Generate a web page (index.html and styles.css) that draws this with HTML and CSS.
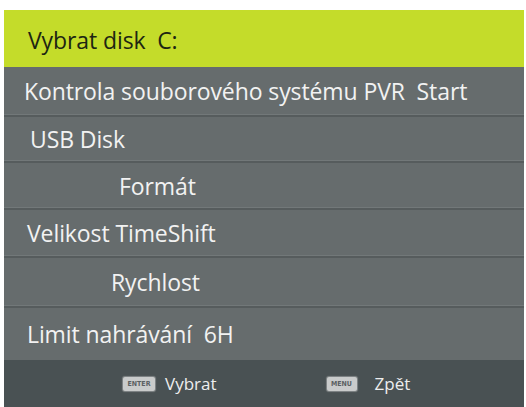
FILE: index.html
```html
<!DOCTYPE html>
<html>
<head>
<meta charset="utf-8">
<link rel="stylesheet" href="styles.css">
</head>
<body>
<div class="panel">
  <div class="header"><span class="t-head">Vybrat disk&nbsp; C:</span></div>
  <div class="row r1"><span class="t t-1">Kontrola souborového systému PVR&nbsp; Start</span></div>
  <div class="row r2"><span class="t t-2">USB Disk</span></div>
  <div class="row r3"><span class="t t-3">Formát</span></div>
  <div class="row r4"><span class="t t-4">Velikost TimeShift</span></div>
  <div class="row r5"><span class="t t-5">Rychlost</span></div>
  <div class="row r6"><span class="t t-6">Limit nahrávání&nbsp; 6H</span></div>
  <div class="footer">
    <div class="hint hint-enter"><span class="key">ENTER</span><span class="hint-label">Vybrat</span></div>
    <div class="hint hint-menu"><span class="key key-menu">MENU</span><span class="hint-label">Zpět</span></div>
  </div>
</div>
</body>
</html>
```

FILE: styles.css
```css
html, body {
  margin: 0;
  padding: 0;
  background: #ffffff;
}
body {
  font-family: "Open Sans", "Noto Sans", sans-serif;
  width: 526px;
  height: 407px;
  overflow: hidden;
}
.panel {
  margin: 10px 2px 0 4px;
  display: flex;
  flex-direction: column;
  background: #666c6d;
}
.header {
  height: 57px;
  background: #c4dc2a;
  display: flex;
  align-items: center;
  padding-left: 24px;
  box-sizing: border-box;
}
.t-head {
  color: #1d2612;
  font-size: 23px;
  letter-spacing: -0.1px;
  padding-top: 2px;
}
.row {
  display: flex;
  align-items: center;
  box-sizing: border-box;
  border-bottom: 2px solid #565c5d;
  box-shadow: inset 0 -1px 0 #727879;
  background: #666c6d;
}
.r1 { height: 50px; }
.r2 { height: 46px; }
.r3 { height: 47px; }
.r4 { height: 48px; }
.r5 { height: 50px; }
.r6 { height: 52px; border-bottom: none; box-shadow: none; }
.t {
  color: #f2f2f2;
  font-size: 23px;
  letter-spacing: -0.1px;
  white-space: nowrap;
}
.t-1 { padding-left: 20px; }
.t-2 { padding-left: 26px; }
.t-3 { padding-left: 115px; }
.t-4 { padding-left: 23px; }
.t-5 { padding-left: 107px; }
.t-6 { padding-left: 23px; }
.footer {
  height: 47px;
  background: #495153;
  display: flex;
  align-items: center;
}
.hint {
  display: flex;
  align-items: center;
}
.hint-enter { margin-left: 119px; }
.hint-menu { margin-left: 110px; }
.key {
  display: inline-block;
  width: 32px;
  height: 14px;
  line-height: 14px;
  background: #c9cbcb;
  color: #5a6062;
  font-family: "DejaVu Sans Condensed", "DejaVu Sans", sans-serif;
  font-size: 7px;
  font-weight: bold;
  text-align: center;
  border-radius: 2px;
  box-shadow: 0 0 1px 1px rgba(220,220,220,0.4);
}
.key-menu { width: 30px; }
.hint-label {
  color: #eeeeee;
  font-size: 17px;
  margin-left: 10px;
}
.hint-menu .hint-label { margin-left: 18px; }
```
